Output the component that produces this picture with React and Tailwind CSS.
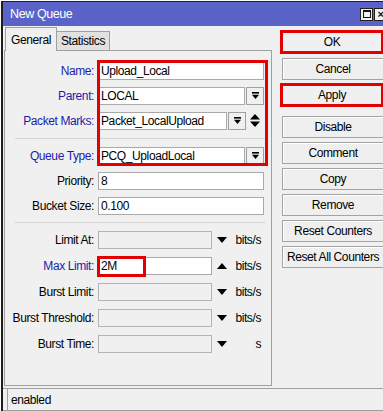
import React from "react";

// Winbox "New Queue" dialog

const blue = "text-[#1c1ca8]";

const DropIcon = () => (
  <svg width="9" height="9" viewBox="0 0 9 9">
    <rect x="1" y="1" width="7" height="1.6" fill="#000" />
    <polygon points="1,3.8 8,3.8 4.5,8" fill="#000" />
  </svg>
);

const DropBtn = () => (
  <div className="ml-[1px] flex h-[18px] w-[18px] items-center justify-center border border-[#a0a0a0] bg-[#f0f0f0]">
    <DropIcon />
  </div>
);

const UpDown = () => (
  <svg width="10" height="13" viewBox="0 0 10 13" className="ml-[4px]">
    <polygon points="5,0 10,5.5 0,5.5" fill="#000" />
    <polygon points="0,7.5 10,7.5 5,13" fill="#000" />
  </svg>
);

const Tri = ({ up }) => (
  <svg width="10" height="6" viewBox="0 0 10 6" className="ml-[5px] mr-[7px]">
    {up ? (
      <polygon points="5,0 10,6 0,6" fill="#000" />
    ) : (
      <polygon points="0,0 10,0 5,6" fill="#000" />
    )}
  </svg>
);

const Field = ({ w, value, disabled }) => (
  <div
    style={{ width: w }}
    className={
      disabled
        ? "h-[18px] border border-[#b4b4b4] bg-[#f0f0f0]"
        : "h-[18px] border border-[#a9a9a9] bg-white pl-[2px] leading-[16px] text-black"
    }
  >
    {value}
  </div>
);

const Row = ({ label, isBlue, tall, children }) => (
  <div className={tall ? "flex h-[26px] items-center" : "flex h-[25px] items-center"}>
    <div
      className={
        isBlue
          ? `w-[89px] whitespace-nowrap text-right ${blue}`
          : "w-[89px] whitespace-nowrap text-right text-black"
      }
    >
      {label}
    </div>
    <div className="ml-[4px] flex items-center">{children}</div>
  </div>
);

const Sep = ({ h }) => (
  <div
    className={
      h === 10
        ? "flex h-[10px] items-center pl-[10px] pr-[6px]"
        : "flex h-[9px] items-center pl-[10px] pr-[6px]"
    }
  >
    <div className="h-[1px] w-full bg-[#d4d4d4]" />
  </div>
);

const Unit = ({ up, text }) => (
  <div className="flex items-center">
    <Tri up={up} />
    <span className="w-[27px] text-right">{text}</span>
  </div>
);

const Btn = ({ label, red, mt }) => (
  <div
    className={
      red
        ? `${mt} flex h-[24px] w-[104px] items-center justify-center whitespace-nowrap border-[3px] border-[#e20000] bg-[#f0f0f0]`
        : `${mt} ml-[2px] flex h-[22px] w-[102px] items-center justify-center whitespace-nowrap border border-[#a3a3a3] bg-[#efefef] shadow-[inset_1px_1px_0_#fff]`
    }
  >
    {label}
  </div>
);

export default function App() {
  return (
    <div className="relative h-[411px] w-[383px] overflow-hidden bg-white font-['Liberation_Sans',Arial,sans-serif] text-[12px] tracking-[-0.4px] text-black">
      <div className="ml-[1px] mt-[1px] flex h-[410px] w-[400px] flex-col border-l-[2px] border-t-[1px] border-[#1e1e1e] bg-[#f0f0f0]">
        {/* title bar */}
        <div className="flex h-[24px] items-center bg-[#5a64c8] pl-[7px] text-white">
          <span className="text-[12.5px]">New Queue</span>
          <div className="ml-auto mr-[14px] flex items-center gap-[1px]">
            <div className="flex h-[13px] w-[13px] items-center justify-center border border-[#222] bg-[#f0f0f0]">
              <div className="h-[8px] w-[8px] border border-t-2 border-[#111]" />
            </div>
            <div className="flex h-[13px] w-[13px] items-center justify-center border border-[#222] bg-[#f0f0f0] text-[11px] font-bold leading-none text-[#111]">
              ×
            </div>
          </div>
        </div>

        {/* body */}
        <div className="flex h-[362px]">
          <div className="ml-[1px] flex w-[268px] flex-col">
            {/* tabs */}
            <div className="flex h-[24px] items-end">
              <div className="relative z-10 -mb-[1px] ml-[1px] flex h-[24px] w-[52px] items-center justify-center border border-b-0 border-[#a0a0a0] bg-[#f0f0f0]">
                General
              </div>
              <div className="flex h-[19px] w-[53px] items-center justify-center border border-b-0 border-l-0 border-[#a0a0a0] bg-[#e1e1e1]">
                Statistics
              </div>
            </div>

            {/* panel */}
            <div className="relative h-[336px] border border-[#a0a0a0] pt-[7px]">
              <Row label="Name:" isBlue>
                <Field w={166} value="Upload_Local" />
              </Row>
              <Row label="Parent:" isBlue>
                <Field w={147} value="LOCAL" />
                <DropBtn />
              </Row>
              <Row label="Packet Marks:" isBlue>
                <Field w={129} value="Packet_LocalUpload" />
                <DropBtn />
                <UpDown />
              </Row>
              <Sep h={10} />
              <Row label="Queue Type:" isBlue>
                <Field w={147} value="PCQ_UploadLocal" />
                <DropBtn />
              </Row>
              <Row label="Priority:">
                <Field w={166} value="8" />
              </Row>
              <Row label="Bucket Size:">
                <Field w={166} value="0.100" />
              </Row>
              <Sep h={9} />
              <Row label="Limit At:" tall>
                <Field w={114} disabled />
                <Unit text="bits/s" />
              </Row>
              <Row label="Max Limit:" isBlue tall>
                <Field w={114} value="2M" />
                <Unit up text="bits/s" />
              </Row>
              <Row label="Burst Limit:" tall>
                <Field w={114} disabled />
                <Unit text="bits/s" />
              </Row>
              <Row label="Burst Threshold:" tall>
                <Field w={114} disabled />
                <Unit text="bits/s" />
              </Row>
              <Row label="Burst Time:" tall>
                <Field w={114} disabled />
                <Unit text="s" />
              </Row>

              {/* highlight boxes */}
              <div className="absolute left-[92px] top-[9px] h-[106px] w-[171px] border-[3px] border-[#e20000]" />
              <div className="absolute left-[92px] top-[205px] h-[21px] w-[49px] border-[3px] border-[#e20000]" />
            </div>
          </div>

          {/* buttons */}
          <div className="ml-[8px] flex flex-col">
            <Btn label="OK" red mt="mt-[4px]" />
            <Btn label="Cancel" mt="mt-[4px]" />
            <Btn label="Apply" red mt="mt-[3px]" />
            <Btn label="Disable" mt="mt-[9px]" />
            <Btn label="Comment" mt="mt-[4px]" />
            <Btn label="Copy" mt="mt-[4px]" />
            <Btn label="Remove" mt="mt-[4px]" />
            <Btn label="Reset Counters" mt="mt-[4px]" />
            <Btn label="Reset All Counters" mt="mt-[4px]" />
          </div>
        </div>

        {/* status bar */}
        <div className="flex h-[23px] items-center border-y border-[#a0a0a0] pl-[4px]">
          <div className="flex h-full items-center border-l border-[#a0a0a0] pl-[3px]">enabled</div>
        </div>
      </div>
    </div>
  );
}
